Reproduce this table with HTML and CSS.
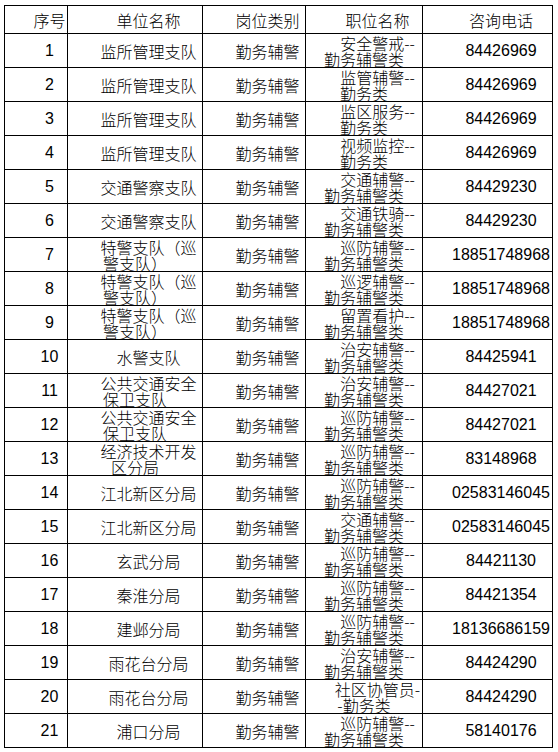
FILE: index.html
```html
<!DOCTYPE html>
<html lang="zh-CN">
<head>
<meta charset="utf-8">
<title>岗位表</title>
<link rel="stylesheet" href="styles.css">
</head>
<body>
<div class="table">
  <div class="c"><span class="s">序号</span></div>
  <div class="c"><span class="s">单位名称</span></div>
  <div class="c"><span class="s">岗位类别</span></div>
  <div class="c"><span class="s">职位名称</span></div>
  <div class="c"><span class="s">咨询电话</span></div>

  <div class="c n"><span class="s">1</span></div>
  <div class="c"><span class="s">监所管理支队</span></div>
  <div class="c"><span class="s">勤务辅警</span></div>
  <div class="c"><span class="s">安全警戒--</span><span>勤务辅警类</span></div>
  <div class="c n"><span class="s">84426969</span></div>

  <div class="c n"><span class="s">2</span></div>
  <div class="c"><span class="s">监所管理支队</span></div>
  <div class="c"><span class="s">勤务辅警</span></div>
  <div class="c"><span class="s">监管辅警--</span><span>勤务类</span></div>
  <div class="c n"><span class="s">84426969</span></div>

  <div class="c n"><span class="s">3</span></div>
  <div class="c"><span class="s">监所管理支队</span></div>
  <div class="c"><span class="s">勤务辅警</span></div>
  <div class="c"><span class="s">监区服务--</span><span>勤务类</span></div>
  <div class="c n"><span class="s">84426969</span></div>

  <div class="c n"><span class="s">4</span></div>
  <div class="c"><span class="s">监所管理支队</span></div>
  <div class="c"><span class="s">勤务辅警</span></div>
  <div class="c"><span class="s">视频监控--</span><span>勤务类</span></div>
  <div class="c n"><span class="s">84426969</span></div>

  <div class="c n"><span class="s">5</span></div>
  <div class="c"><span class="s">交通警察支队</span></div>
  <div class="c"><span class="s">勤务辅警</span></div>
  <div class="c"><span class="s">交通辅警--</span><span>勤务辅警类</span></div>
  <div class="c n"><span class="s">84429230</span></div>

  <div class="c n"><span class="s">6</span></div>
  <div class="c"><span class="s">交通警察支队</span></div>
  <div class="c"><span class="s">勤务辅警</span></div>
  <div class="c"><span class="s">交通铁骑--</span><span>勤务辅警类</span></div>
  <div class="c n"><span class="s">84429230</span></div>

  <div class="c n"><span class="s">7</span></div>
  <div class="c"><span class="s">特警支队（巡</span><span>警支队）</span></div>
  <div class="c"><span class="s">勤务辅警</span></div>
  <div class="c"><span class="s">巡防辅警--</span><span>勤务辅警类</span></div>
  <div class="c n"><span class="s">18851748968</span></div>

  <div class="c n"><span class="s">8</span></div>
  <div class="c"><span class="s">特警支队（巡</span><span>警支队）</span></div>
  <div class="c"><span class="s">勤务辅警</span></div>
  <div class="c"><span class="s">巡逻辅警--</span><span>勤务辅警类</span></div>
  <div class="c n"><span class="s">18851748968</span></div>

  <div class="c n"><span class="s">9</span></div>
  <div class="c"><span class="s">特警支队（巡</span><span>警支队）</span></div>
  <div class="c"><span class="s">勤务辅警</span></div>
  <div class="c"><span class="s">留置看护--</span><span>勤务辅警类</span></div>
  <div class="c n"><span class="s">18851748968</span></div>

  <div class="c n"><span class="s">10</span></div>
  <div class="c"><span class="s">水警支队</span></div>
  <div class="c"><span class="s">勤务辅警</span></div>
  <div class="c"><span class="s">治安辅警--</span><span>勤务辅警类</span></div>
  <div class="c n"><span class="s">84425941</span></div>

  <div class="c n"><span class="s">11</span></div>
  <div class="c"><span class="s">公共交通安全</span><span>保卫支队</span></div>
  <div class="c"><span class="s">勤务辅警</span></div>
  <div class="c"><span class="s">治安辅警--</span><span>勤务辅警类</span></div>
  <div class="c n"><span class="s">84427021</span></div>

  <div class="c n"><span class="s">12</span></div>
  <div class="c"><span class="s">公共交通安全</span><span>保卫支队</span></div>
  <div class="c"><span class="s">勤务辅警</span></div>
  <div class="c"><span class="s">巡防辅警--</span><span>勤务辅警类</span></div>
  <div class="c n"><span class="s">84427021</span></div>

  <div class="c n"><span class="s">13</span></div>
  <div class="c"><span class="s">经济技术开发</span><span>区分局</span></div>
  <div class="c"><span class="s">勤务辅警</span></div>
  <div class="c"><span class="s">巡防辅警--</span><span>勤务辅警类</span></div>
  <div class="c n"><span class="s">83148968</span></div>

  <div class="c n"><span class="s">14</span></div>
  <div class="c"><span class="s">江北新区分局</span></div>
  <div class="c"><span class="s">勤务辅警</span></div>
  <div class="c"><span class="s">巡防辅警--</span><span>勤务辅警类</span></div>
  <div class="c n"><span class="s">02583146045</span></div>

  <div class="c n"><span class="s">15</span></div>
  <div class="c"><span class="s">江北新区分局</span></div>
  <div class="c"><span class="s">勤务辅警</span></div>
  <div class="c"><span class="s">交通辅警--</span><span>勤务辅警类</span></div>
  <div class="c n"><span class="s">02583146045</span></div>

  <div class="c n"><span class="s">16</span></div>
  <div class="c"><span class="s">玄武分局</span></div>
  <div class="c"><span class="s">勤务辅警</span></div>
  <div class="c"><span class="s">巡防辅警--</span><span>勤务辅警类</span></div>
  <div class="c n"><span class="s">84421130</span></div>

  <div class="c n"><span class="s">17</span></div>
  <div class="c"><span class="s">秦淮分局</span></div>
  <div class="c"><span class="s">勤务辅警</span></div>
  <div class="c"><span class="s">巡防辅警--</span><span>勤务辅警类</span></div>
  <div class="c n"><span class="s">84421354</span></div>

  <div class="c n"><span class="s">18</span></div>
  <div class="c"><span class="s">建邺分局</span></div>
  <div class="c"><span class="s">勤务辅警</span></div>
  <div class="c"><span class="s">巡防辅警--</span><span>勤务辅警类</span></div>
  <div class="c n"><span class="s">18136686159</span></div>

  <div class="c n"><span class="s">19</span></div>
  <div class="c"><span class="s">雨花台分局</span></div>
  <div class="c"><span class="s">勤务辅警</span></div>
  <div class="c"><span class="s">治安辅警--</span><span>勤务辅警类</span></div>
  <div class="c n"><span class="s">84424290</span></div>

  <div class="c n"><span class="s">20</span></div>
  <div class="c"><span class="s">雨花台分局</span></div>
  <div class="c"><span class="s">勤务辅警</span></div>
  <div class="c"><span class="s">社区协管员-</span><span>-勤务类</span></div>
  <div class="c n"><span class="s">84424290</span></div>

  <div class="c n"><span class="s">21</span></div>
  <div class="c"><span class="s">浦口分局</span></div>
  <div class="c"><span class="s">勤务辅警</span></div>
  <div class="c"><span class="s">巡防辅警--</span><span>勤务辅警类</span></div>
  <div class="c n"><span class="s">58140176</span></div>
</div>
</body>
</html>
```

FILE: styles.css
```css
html, body {
  margin: 0;
  padding: 0;
  background: #ffffff;
}

body {
  font-family: "Noto Sans CJK SC", "Liberation Sans", sans-serif;
  font-size: 16px;
  font-weight: 300;
  color: #000000;
}

.table {
  display: grid;
  grid-template-columns: 62px 134px 102px 116px 129px;
  grid-template-rows: 27px repeat(21, 33px);
  gap: 1px;
  padding: 1px;
  background: #000000;
  width: max-content;
  margin: 5px 0 0 4px;
}

.c {
  background: #ffffff;
  display: flex;
  flex-direction: column;
  align-items: center;
  justify-content: center;
  overflow: hidden;
  line-height: 16px;
  white-space: nowrap;
}

.c span {
  display: block;
}

.c .s {
  padding-left: 27px;
}

.n {
  font-family: "Liberation Sans", Arial, sans-serif;
  font-weight: 400;
}
```
